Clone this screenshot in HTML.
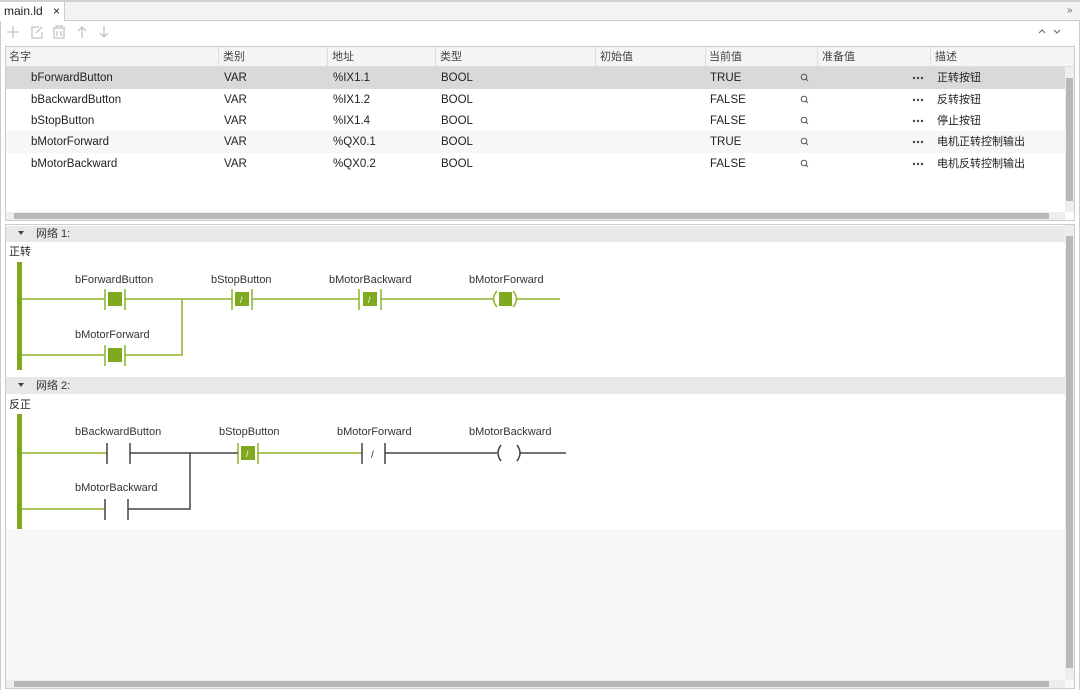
<!DOCTYPE html><html><head><meta charset="utf-8"><style>
*{margin:0;padding:0;box-sizing:border-box}
body{width:1080px;height:690px;background:#f0f0f0;font-family:"Liberation Sans","Noto Sans CJK SC",sans-serif;font-size:11.5px;color:#222;position:relative;overflow:hidden;line-height:14px}
.a{position:absolute}
.t{position:absolute;white-space:nowrap;line-height:14px}
.c{font-size:11px}
</style></head><body>
<div class="a" style="left:0;top:0;width:1080px;height:2px;background:#d0d0d0"></div>
<div class="a" style="left:0;top:2px;width:1080px;height:19px;background:#f3f3f3;border-bottom:1px solid #ccc"></div>
<div class="a" style="left:0;top:2px;width:65px;height:20px;background:#fff;border-right:1px solid #ccc"></div>
<div class="t" style="left:4px;top:4px;font-size:12px">main.ld</div>
<div class="t" style="left:53px;top:4px;font-size:12px">×</div>
<div class="t" style="left:1067px;top:4px;font-size:10px;color:#666">»</div>
<div class="a" style="left:0;top:21px;width:1080px;height:669px;background:#fff;border-left:1px solid #ccc;border-right:1px solid #ccc"></div>
<svg class="a" style="left:0;top:21px" width="120" height="22" fill="none" stroke="#c4c4c4" stroke-width="1.3">
<path d="M13 5V17M7 11H19"/>
<path d="M39 6H32V17H42V11M36 12L42 6"/>
<path d="M53 7H65M56 7V5H62V7M54 7V17H64V7M57 10V15M61 10V15"/>
<path d="M82 17V6M78 10L82 6L86 10"/>
<path d="M104 5V16M100 12L104 16L108 12"/>
</svg>
<svg class="a" style="left:1036px;top:26px" width="30" height="12" fill="none" stroke="#666" stroke-width="1">
<path d="M3 7L6 4L9 7M18 4L21 7L24 4"/></svg>
<!-- table -->
<div class="a" style="left:5px;top:46px;width:1070px;height:175px;border:1px solid #ccc;background:#fff"></div>
<div class="a" style="left:6px;top:47px;width:1068px;height:20px;background:#f5f5f5;border-bottom:1px solid #ddd"></div>
<div class="a" style="left:6px;top:67px;width:1059px;height:22px;background:#d9d9d9"></div>
<div class="a" style="left:6px;top:131px;width:1059px;height:22px;background:#f7f7f7"></div>
<div class="a" style="left:218px;top:47px;width:1px;height:20px;background:#ddd"></div>
<div class="a" style="left:327px;top:47px;width:1px;height:20px;background:#ddd"></div>
<div class="a" style="left:435px;top:47px;width:1px;height:20px;background:#ddd"></div>
<div class="a" style="left:595px;top:47px;width:1px;height:20px;background:#ddd"></div>
<div class="a" style="left:705px;top:47px;width:1px;height:20px;background:#ddd"></div>
<div class="a" style="left:817px;top:47px;width:1px;height:20px;background:#ddd"></div>
<div class="a" style="left:930px;top:47px;width:1px;height:20px;background:#ddd"></div>
<div class="t c" style="left:9px;top:50px;color:#444">名字</div>
<div class="t c" style="left:223px;top:50px;color:#444">类别</div>
<div class="t c" style="left:332px;top:50px;color:#444">地址</div>
<div class="t c" style="left:440px;top:50px;color:#444">类型</div>
<div class="t c" style="left:600px;top:50px;color:#444">初始值</div>
<div class="t c" style="left:709px;top:50px;color:#444">当前值</div>
<div class="t c" style="left:822px;top:50px;color:#444">准备值</div>
<div class="t c" style="left:935px;top:50px;color:#444">描述</div>
<div class="t" style="left:31px;top:71px">bForwardButton</div><div class="t" style="left:224px;top:71px">VAR</div><div class="t" style="left:333px;top:71px">%IX1.1</div><div class="t" style="left:441px;top:71px">BOOL</div><div class="t" style="left:710px;top:71px">TRUE</div><div class="t c" style="left:937px;top:71px">正转按钮</div>
<div class="t" style="left:31px;top:93px">bBackwardButton</div><div class="t" style="left:224px;top:93px">VAR</div><div class="t" style="left:333px;top:93px">%IX1.2</div><div class="t" style="left:441px;top:93px">BOOL</div><div class="t" style="left:710px;top:93px">FALSE</div><div class="t c" style="left:937px;top:93px">反转按钮</div>
<div class="t" style="left:31px;top:114px">bStopButton</div><div class="t" style="left:224px;top:114px">VAR</div><div class="t" style="left:333px;top:114px">%IX1.4</div><div class="t" style="left:441px;top:114px">BOOL</div><div class="t" style="left:710px;top:114px">FALSE</div><div class="t c" style="left:937px;top:114px">停止按钮</div>
<div class="t" style="left:31px;top:135px">bMotorForward</div><div class="t" style="left:224px;top:135px">VAR</div><div class="t" style="left:333px;top:135px">%QX0.1</div><div class="t" style="left:441px;top:135px">BOOL</div><div class="t" style="left:710px;top:135px">TRUE</div><div class="t c" style="left:937px;top:135px">电机正转控制输出</div>
<div class="t" style="left:31px;top:157px">bMotorBackward</div><div class="t" style="left:224px;top:157px">VAR</div><div class="t" style="left:333px;top:157px">%QX0.2</div><div class="t" style="left:441px;top:157px">BOOL</div><div class="t" style="left:710px;top:157px">FALSE</div><div class="t c" style="left:937px;top:157px">电机反转控制输出</div>
<svg class="a" style="left:790px;top:67px" width="140" height="110">
<g fill="none" stroke="#555" stroke-width="1">
<g id="m"><circle cx="14" cy="10" r="2.8"/><path d="M16 12L18 14"/></g>
<use href="#m" y="22"/><use href="#m" y="43"/><use href="#m" y="64"/><use href="#m" y="86"/>
</g>
<g fill="#444"><g id="d"><circle cx="124" cy="11" r="1.2"/><circle cx="128" cy="11" r="1.2"/><circle cx="132" cy="11" r="1.2"/></g>
<use href="#d" y="22"/><use href="#d" y="43"/><use href="#d" y="64"/><use href="#d" y="86"/></g>
</svg>
<div class="a" style="left:1065px;top:67px;width:9px;height:145px;background:#eee"></div>
<div class="a" style="left:1066px;top:78px;width:7px;height:123px;background:#b8b8b8"></div>
<div class="a" style="left:6px;top:212px;width:1059px;height:8px;background:#eee"></div>
<div class="a" style="left:14px;top:213px;width:1035px;height:6px;background:#b8b8b8"></div>
<!-- ladder panel -->
<div class="a" style="left:5px;top:224px;width:1070px;height:465px;border:1px solid #ccc;background:#f7f7f7"></div>
<div class="a" style="left:6px;top:225px;width:1059px;height:304px;background:#fff"></div>
<div class="a" style="left:6px;top:226px;width:1059px;height:16px;background:#e8e8e8"></div>
<div class="a" style="left:6px;top:377px;width:1059px;height:17px;background:#e8e8e8"></div>
<div class="t c" style="left:36px;top:227px;color:#333">网络 1:</div>
<div class="t c" style="left:36px;top:379px;color:#333">网络 2:</div>
<div class="t c" style="left:9px;top:245px">正转</div>
<div class="t c" style="left:9px;top:398px">反正</div>
<div class="a" style="left:1065px;top:225px;width:9px;height:455px;background:#eee"></div>
<div class="a" style="left:1066px;top:236px;width:7px;height:432px;background:#b8b8b8"></div>
<div class="a" style="left:6px;top:680px;width:1059px;height:8px;background:#eee"></div>
<div class="a" style="left:14px;top:681px;width:1035px;height:6px;background:#b8b8b8"></div>
<svg class="a" style="left:0;top:0" width="1080" height="690" font-family="Liberation Sans, sans-serif" font-size="11" fill="#333">
<path d="M18 231H24L21 235Z M18 383H24L21 387Z" fill="#444"/>
<g fill="#7fa91f" stroke="none">
<rect x="17" y="262" width="5" height="108"/><rect x="17" y="414" width="5" height="115"/>
</g>
<g stroke="#8cb52a" stroke-width="1.5" fill="none">
<path d="M22 299H105M125 299H232M252 299H359M381 299H493M517 299H560M22 355H105M125 355H182V299"/>
<path d="M105 289V310M125 289V310M232 289V310M252 289V310M359 289V310M381 289V310M105 345V366M125 345V366"/>
<path d="M497 291Q490 299 497 307M513 291Q520 299 513 307"/>
<path d="M22 453H107M22 509H105M258 453H362M238 443V464M258 443V464"/>
</g>
<g fill="#7fa91f">
<rect x="108" y="292" width="14" height="14"/><rect x="108" y="348" width="14" height="14"/>
<rect x="235" y="292" width="14" height="14"/><rect x="363" y="292" width="14" height="14"/>
<rect x="499" y="292" width="13" height="14"/><rect x="241" y="446" width="14" height="14"/>
</g>
<g fill="#fff" font-size="9"><text x="240" y="303">/</text><text x="368" y="303">/</text><text x="246" y="457">/</text></g>
<g stroke="#444" stroke-width="1.5" fill="none">
<path d="M107 443V464M130 443V464M130 453H238M128 509H190V453M105 499V520M128 499V520"/>
<path d="M362 443V464M385 443V464M385 453H497M520 453H566"/>
<path d="M501 445Q495 453 501 461M517 445Q523 453 517 461"/>
</g>
<text x="371" y="458" font-size="10">/</text>
<text x="75" y="283">bForwardButton</text><text x="211" y="283">bStopButton</text><text x="329" y="283">bMotorBackward</text><text x="469" y="283">bMotorForward</text>
<text x="75" y="338">bMotorForward</text>
<text x="75" y="435">bBackwardButton</text><text x="219" y="435">bStopButton</text><text x="337" y="435">bMotorForward</text><text x="469" y="435">bMotorBackward</text>
<text x="75" y="491">bMotorBackward</text>
</svg>
</body></html>
